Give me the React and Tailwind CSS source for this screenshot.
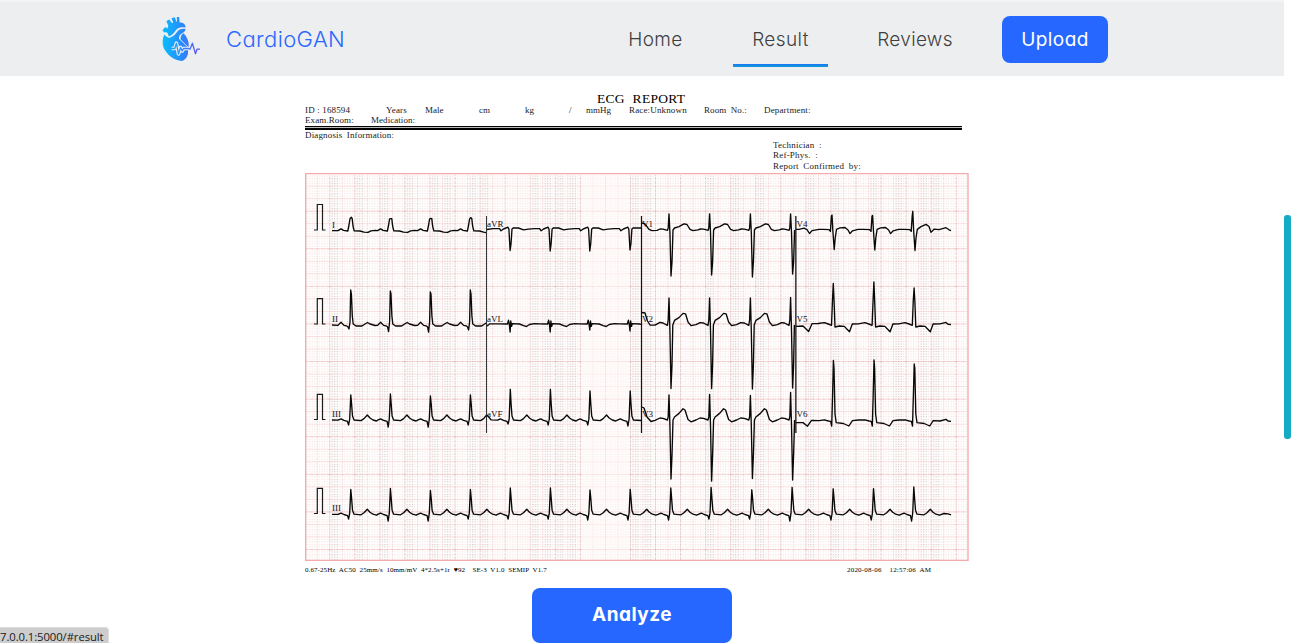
import React from "react";

// Samples of one beat are [dx from the R peak, y]; Q, R, S marks are replaced per beat.
const beat = (x, shape, over = {}) =>
  shape.map(([dx, y, tag]) => [x + dx, tag && over[tag] !== undefined ? over[tag] : y]);

const toPath = (pts) => "M" + pts.map(([x, y]) => `${x.toFixed(1)} ${y.toFixed(1)}`).join("L");

const leadI = [[-13, 230.6], [-10, 228.8], [-7.5, 230.3], [-3.2, 231], [-2, 225], [-1, 218.8], [0.4, 217.3, "R"], [1.2, 218.6], [2, 226], [3.2, 230.8], [9, 231], [13, 232.2], [17, 232.4], [20, 230.8], [24, 230.4]];
const leadII = [[-13, 325.4], [-10, 322.3], [-7, 325.4], [-4.5, 325.8], [-3, 327], [-2, 330, "Q"], [-1, 322], [-0.3, 290, "R"], [0.4, 294], [1.3, 316], [2.2, 324], [5, 326], [11, 326], [14, 324], [16.5, 322.5], [19, 324], [24, 325.5]];
const leadIII = [[-13, 420.2], [-10, 418.9], [-7, 420.3], [-3.5, 421.4], [-2.4, 425, "Q"], [-1.3, 419], [-0.2, 395, "R"], [0.6, 404], [1.5, 416], [3, 420], [10, 420.6], [13, 418.6], [16.3, 415], [19, 418], [22, 420], [25.5, 421]];
const leadAVR = [[-11, 228.6], [-9.5, 230.8], [-7, 229], [-2.5, 227.2], [-1.6, 229], [-0.4, 250, "R"], [0.5, 244], [1.5, 229], [3, 227.8], [8, 228], [13, 229.8], [18, 229.2], [24, 228.7]];
const leadAVL = [[-11, 323.9], [-3, 324], [-2, 320.2], [-1.2, 324], [-0.4, 332, "R"], [0.3, 321], [1, 326.4], [2, 323.6], [9, 324], [13, 325.6], [16, 326.5], [19, 324.5], [24, 323.7]];
const leadV1 = [[-6, 229.2], [-1.5, 230.3], [-0.8, 228], [0, 214, "R"], [0.9, 232], [2, 276, "S"], [3, 262], [4, 230], [5.5, 228], [10, 226.6], [15, 223.8], [18, 224.5], [21, 229.3], [24, 230.6], [29, 229.8], [31.5, 229]];
const leadV2 = [[-6, 323], [-1.6, 325.4], [-0.8, 320], [0, 298, "R"], [0.9, 330], [2, 388, "S"], [3, 365], [3.8, 325], [5.5, 320.4], [10, 317.6], [14, 313.4], [16.5, 313.8], [19, 322], [22, 325.6], [27, 324.6], [31, 322.6]];
const leadV3 = [[-6, 418.4], [-1.6, 420], [-0.8, 417], [0, 395, "R"], [0.9, 425], [2, 479, "S"], [3, 455], [4, 420], [5.5, 417], [10, 413.4], [14, 408.7], [16, 410], [19, 419.5], [22, 421.8], [27, 420], [31, 418]];
const leadV4 = [[-9, 229.3], [-3, 229.6], [-1.6, 231.4], [-0.6, 216], [0, 215, "R"], [0.8, 230], [2.2, 249.5, "S"], [3.2, 238], [4.5, 229.4], [8, 227.9], [13, 227.5], [16, 230], [18, 233.6], [20.5, 230.8], [26, 229.4]];
const leadV5 = [[-9, 322.6], [-5, 324], [-1.8, 325.3], [-0.8, 300], [0, 284, "R"], [0.8, 302], [1.7, 327], [6, 326], [11, 326.4], [14, 329.5], [16.2, 331.8], [19, 324], [25, 323.8]];
const leadV6 = [[-9, 419.8], [-5, 421], [-2.8, 421.4], [-1.7, 426], [-0.8, 395], [0, 361, "R"], [0.6, 368], [1.6, 414], [2.8, 422.6], [10, 423.5], [15.5, 426], [19, 420.6], [25, 420]];

// A lead is the lead-in points, its beats clipped at `limit`, and the closing points.
const chain = (start, xs, shape, peaks, others = [], end = [], limit = 960) =>
  toPath([
    ...start,
    ...xs.flatMap((x, i) => beat(x, shape, { R: peaks[i], ...(others[i] || {}) })).filter(([x]) => x < limit),
    ...end,
  ]);

const first = [351, 390.6, 430.6, 470.6];
const second = [510.5, 550.6, 590.2, 630.4];
const third = [669, 709.6, 750.4, 790.6];
const fourth = [832, 872.6, 912.8];
const rhythm = [...first, ...second, 671, 711.3, 752, 792.3, 833.4, 873.7, 914];
const q = (...v) => v.map((Q) => ({ Q }));
const s = (...v) => v.map((S) => ({ S }));

const traces = [
  chain([[332, 230.7]], first, leadI, [217.3, 218.6, 218.4, 217.6], [], [[486, 232.6]], 484),
  chain([[332, 325]], first, leadII, [290, 291, 292, 290], q(329, 331.5, 332, 330), [[486, 323]], 486),
  chain([[332, 420]], first, leadIII, [395, 394, 396, 395], q(425, 427, 427, 425), [[486.5, 415.3]], 486),
  chain([[487, 229.5], [493, 228.6]], second, leadAVR, [250.5, 251, 251, 250], [], [[641, 228]], 640),
  chain([[487, 326], [490, 323.8]], second, leadAVL, [332, 332, 330, 331], [], [[641, 324.4]], 640),
  chain([[487, 415], [491, 419.8]], second, leadIII, [389.3, 389.3, 391, 391], q(424, 425, 425, 426), [[641, 420.5]], 640),
  chain([[642, 223], [645, 223.8], [649, 229.4], [652, 230.6], [657, 230.4], [660, 229]], third, leadV1, [214, 214, 214, 214], s(276, 275, 277, 274), [], 795.5),
  chain([[642, 312.5], [645, 313], [647.5, 321], [650, 325], [655, 325.2], [660, 322.4]], third, leadV2, [298, 298, 298, 297.5], s(388.5, 388.5, 389, 388), [], 795.5),
  chain([[642, 407], [644, 408], [647, 417], [651, 421.5], [655, 420.3], [660, 418]], third, leadV3, [395, 394.5, 395.5, 392.5], s(479, 481, 478.5, 480), [], 795.5),
  chain([[796, 229.4], [799, 229.4], [804, 228.2], [807, 229.6], [809.5, 233.5], [812, 230.6], [819, 229.3]], fourth, leadV4, [215, 215.5, 211.3], s(249.5, 250, 250.5), [[921, 226.6], [926, 224.4], [929, 226.5], [931, 232.4], [934, 229.2], [939, 229.6], [946, 227.7], [949, 229.8], [951, 230.6]], 919),
  chain([[796, 326.3], [803, 326], [808.6, 331.6], [812, 323.7], [818, 323.5]], fourth.map((x) => x + 1.3), leadV5, [283.5, 282, 288], [], [[940, 323.8], [946, 322.4], [948, 324.3], [951, 324.5]], 938),
  chain([[796, 422.6], [803, 422.6], [807.5, 426.2], [811.5, 420.4], [819, 420.7]], fourth.map((x) => x + 1.4), leadV6, [360.5, 360, 364], [], [[940, 421], [946, 419.4], [948, 421], [951, 421.3]], 938),
  chain([[332, 514.3]], rhythm, leadIII.map(([x, y, t]) => [x, y + 94.2, t]), [489.5, 488.5, 490.5, 489.5, 488, 488, 490, 489.3, 488, 487.4, 489.8, 487.3, 488.8, 488.6, 487], q(519, 521, 521, 519, 519, 519, 520, 520, 520, 519, 519, 521, 520, 520, 521), [[944, 513.5], [948, 513.8], [951, 514.8]]),
];

const leadLabels = [
  [332, 227.5, "I"], [332, 322, "II"], [332, 417, "III"], [332, 511, "III"],
  [487, 227.2, "aVR"], [487, 322, "aVL"], [487, 417, "aVF"],
  [642, 227.2, "V1"], [642, 321.5, "V2"], [642, 416.5, "V3"],
  [796.5, 227.2, "V4"], [796.5, 321.8, "V5"], [796.5, 416.5, "V6"],
];

const strongBands = [[329, 13], [354, 13], [379, 13], [404, 13], [429, 26], [467, 26], [532, 48], [631, 26], [705, 13], [730, 13], [755, 13], [805, 13], [830, 13], [868, 13], [893, 13], [918, 26]];

function EcgChart() {
  return (
    <svg className="block h-[389px] w-[665px]" viewBox="305 172 665 389" role="img" aria-label="ECG">
      <defs>
        <pattern id="minor" x="304.2" y="173.1" width="2.506" height="2.506" patternUnits="userSpaceOnUse">
          <rect width="1" height="1" fill="#d9b0b0" opacity="0.36" />
        </pattern>
        <pattern id="strong" x="304.2" y="173.1" width="12.53" height="5.012" patternUnits="userSpaceOnUse">
          <path d="M3 0v1.3M5.5 0v1.3M8 0v1.3M3 2.5v1M5.5 2.5v1M8 2.5v1" stroke="#968888" strokeWidth="0.8" opacity="0.4" />
        </pattern>
        <pattern id="major" x="304.2" y="173.1" width="12.53" height="12.53" patternUnits="userSpaceOnUse">
          <path d="M0 .5H12.53" stroke="#f8c6c6" strokeWidth="0.9" opacity="0.5" />
          <path d="M.5 0V12.53" stroke="#eab8b8" strokeWidth="0.9" strokeDasharray="3 1.2" opacity="0.42" />
        </pattern>
        <pattern id="wide" x="304.2" y="173.1" width="25.06" height="37.59" patternUnits="userSpaceOnUse">
          <path d="M0 .5H25.06" stroke="#e0a4a4" strokeWidth="0.9" strokeDasharray="4 1.5" opacity="0.38" />
          <path d="M.5 0V37.59" stroke="#b99" strokeWidth="0.8" strokeDasharray="2.5 1.5" opacity="0.38" />
        </pattern>
      </defs>
      <rect x="306" y="173" width="662" height="387" fill="#fffdfd" />
      <rect x="306" y="175" width="661" height="385" fill="url(#minor)" />
      {strongBands.map(([x, w]) => (
        <rect key={x} x={x} y="175" width={w} height="385" fill="url(#strong)" />
      ))}
      <rect x="306" y="175" width="661" height="385" fill="url(#major)" />
      <rect x="306" y="175" width="661" height="385" fill="url(#wide)" />
      <rect x="581" y="175" width="49" height="385" fill="#fffafa" opacity="0.5" />
      <rect x="494" y="175" width="37" height="385" fill="#fffafa" opacity="0.2" />
      <path d="M305.7 173.6H968V560.4H305.7Z" fill="none" stroke="#f5abab" strokeWidth="1.4" />
      <path d="M486.5 216V433" stroke="#333" strokeWidth="1" />
      <path d="M641.5 216V433" stroke="#111" strokeWidth="1.2" />
      <path d="M795.8 216V433" stroke="#444" strokeWidth="1.7" />
      {[[230, 204.5], [324, 298.7], [419.5, 394.3], [513.5, 488.4]].map(([b, t]) => (
        <path key={b} d={`M314 ${b}H317.3V${t}H322.5V${b}H325.5`} fill="none" stroke="#1a1a1a" strokeWidth="1.2" />
      ))}
      {traces.map((d, i) => (
        <path key={i} d={d} fill="none" stroke="#080808" strokeWidth="1.35" strokeLinejoin="round" />
      ))}
      {leadLabels.map(([x, y, t]) => (
        <text key={x + t + y} x={x} y={y} fill="#111" className="font-['Liberation_Serif',serif] text-[9px]">{t}</text>
      ))}
    </svg>
  );
}

function Logo() {
  return (
    <svg className="block h-[46px] w-[40px]" viewBox="162 16 40 46" aria-label="CardioGAN logo">
      <defs>
        <linearGradient id="heart" x1="162" y1="0" x2="201" y2="0" gradientUnits="userSpaceOnUse">
          <stop offset="0" stopColor="#06c0ff" />
          <stop offset="0.55" stopColor="#2b86fb" />
          <stop offset="1" stopColor="#6a4bf0" />
        </linearGradient>
      </defs>
      <g fill="url(#heart)">
        <path d="M162.4 30.2L165.2 27L167.4 28.4L168.3 26L166.4 21L169.4 19.6L172 23.3L173.2 22.6L171.5 18.2L174.8 17.2L176.3 21.4H177L176.8 17H179.2L179.6 22.4C182.9 22.2 185.6 24 185.6 27.6C180 26.6 177 28.2 175.2 31C173.4 33.8 171 35.6 168.8 36.6L167.7 33.3L166 31.9L164.2 32.4Z" />
        <path d="M164.2 34.4L166.6 36.7L169 37.9C174.4 36.5 175.6 33.7 177.6 31.3C179.7 28.8 183.2 28.5 185.5 29C185.5 31.1 183.8 32.5 182.2 33.2C179.9 34.3 178.6 36.3 179 39C180.7 40.5 181.8 41.7 183.3 43C185 44.8 187 46 187.8 47.8C189 53.8 187 59.6 182 60.9C174.5 61 166.3 54.5 163.3 47C162.3 43 162.4 38 164.2 34.4Z" />
        <path d="M180.6 39.4C180.1 36.7 181.6 34.5 183.6 33.3C186.4 36 189.6 41.8 188.7 47.6C186.3 44.4 183.2 42.2 180.6 39.4Z" />
      </g>
      <path d="M171.6 48.5H174.8L176.4 43.2L178.5 54L180.6 47.4L182.2 51L183.6 48.5H188.5L190 49.3L192.4 43.2L195.5 53.8L197 49.2H199.5" fill="none" stroke="#edeef0" strokeWidth="3.6" strokeLinejoin="round" />
      <path d="M171.6 48.5H174.8L176.4 43.2L178.5 54L180.6 47.4L182.2 51L183.6 48.5H188.5L190 49.3L192.4 43.2L195.5 53.8L197 49.2H199.5" fill="none" stroke="url(#heart)" strokeWidth="1.3" strokeLinejoin="round" strokeLinecap="round" />
    </svg>
  );
}

function Header() {
  return (
    <header className="flex h-[76px] shrink-0 items-start border-t-2 border-[#f3f4f5] bg-[#edeef0] pl-[162px] pt-[14px] font-['Inter',sans-serif] [font-feature-settings:'cv11']">
      <Logo />
      <div className="ml-6 w-[382px] whitespace-nowrap pt-[7px] text-[22px] font-light leading-[33px] tracking-[0.4px] text-[#2a67ff]">CardioGAN</div>
      <nav className="flex gap-[30px] whitespace-nowrap text-center text-[19px] font-light leading-[48px] text-[#3f3f3f]">
        <a className="h-[51px] w-[95px] tracking-[0.4px]">Home</a>
        <a className="flex h-[51px] w-[95px] flex-col">
          <span className="h-12 tracking-[0.4px]">Result</span>
          <span className="h-[3px] shrink-0 bg-linear-to-b from-[#1f72f5] to-[#129fd6]" />
        </a>
        <a className="h-[51px] w-[114px] tracking-[0.3px]">Reviews</a>
        <a className="h-[47px] w-[106px] rounded-lg bg-[#2668ff] font-normal tracking-[0.4px] text-white">Upload</a>
      </nav>
    </header>
  );
}

function ReportHead() {
  return (
    <div className="flex h-[80px] flex-col whitespace-pre text-[9px] leading-[10px] text-[#1a1a1a]">
      <h1 className="h-[13px] pl-[292px] text-[13.5px] leading-[14px] tracking-[0.3px] text-black [word-spacing:4px]">ECG REPORT</h1>
      <div className="flex h-[10px] leading-[11px]">
        <span className="w-[81px] tracking-[0.15px]">ID : 168594</span>
        <span className="w-[39px] tracking-[0.15px]">Years</span>
        <span className="w-[54px]">Male</span>
        <span className="w-[46px]">cm</span>
        <span className="w-[44px]">kg</span>
        <span className="w-[17px]">/</span>
        <span className="w-[43px]">mmHg</span>
        <span className="w-[75px] tracking-[0.15px]">Race:Unknown</span>
        <span className="w-[60px] tracking-[0.1px] [word-spacing:2px]">Room No.:</span>
        <span className="tracking-[0.15px]">Department:</span>
      </div>
      <div className="flex h-[11px] leading-[11px]">
        <span className="w-[66px] tracking-[0.1px]">Exam.Room:</span>
        <span className="tracking-[0.05px]">Medication:</span>
      </div>
      <div className="h-1 w-[657px] shrink-0 border-b-2 border-t border-black bg-[#bbb]" />
      <div className="h-[10px] tracking-[0.15px] [word-spacing:2px]">Diagnosis Information:</div>
      <div className="flex flex-col pl-[468px] text-[9px] leading-[10.4px] tracking-[0.22px] [word-spacing:2px]">
        <span>Technician :</span>
        <span>Ref-Phys. :</span>
        <span>Report Confirmed by:</span>
      </div>
    </div>
  );
}

export default function App() {
  return (
    <div className="relative flex h-[643px] w-[1291px] overflow-hidden bg-white">
      <div className="flex w-[1284px] flex-col">
        <Header />
        <main className="flex flex-col pl-[305px] pt-4">
          <section className="flex w-[665px] flex-col font-['Liberation_Serif',serif]">
            <ReportHead />
            <EcgChart />
            <div className="flex h-[27px] items-start whitespace-pre pt-[4px] text-[7px] leading-[10px] text-black">
              <span className="w-[542px] tracking-[0.09px]">0.67-25Hz  AC50  25mm/s  10mm/mV  4*2.5s+1r  ♥92    SE-3  V1.0  SEMIP  V1.7</span>
              <span className="tracking-[0.2px]">2020-08-06    12:57:06  AM</span>
            </div>
          </section>
          <button className="ml-[227px] h-[55px] w-[200px] rounded-lg bg-[#2668ff] font-['Inter',sans-serif] text-[19px] font-bold tracking-[0.5px] text-white [font-feature-settings:'cv11']">Analyze</button>
        </main>
      </div>
      <aside className="flex w-[7px] flex-col bg-white pt-[215px]">
        <div className="h-[224px] rounded-[3px] bg-[#14abc4]" />
      </aside>
      <div className="absolute bottom-0 left-0 flex h-4 w-[109px] whitespace-nowrap rounded-tr border-r border-t border-[#dcdcdc] bg-[#cdcdcd] pt-[2px] font-['Open_Sans',sans-serif] text-[11.3px] leading-[14px] tracking-[-0.08px] text-[#1a1a1a]">7.0.0.1:5000/#result</div>
    </div>
  );
}
